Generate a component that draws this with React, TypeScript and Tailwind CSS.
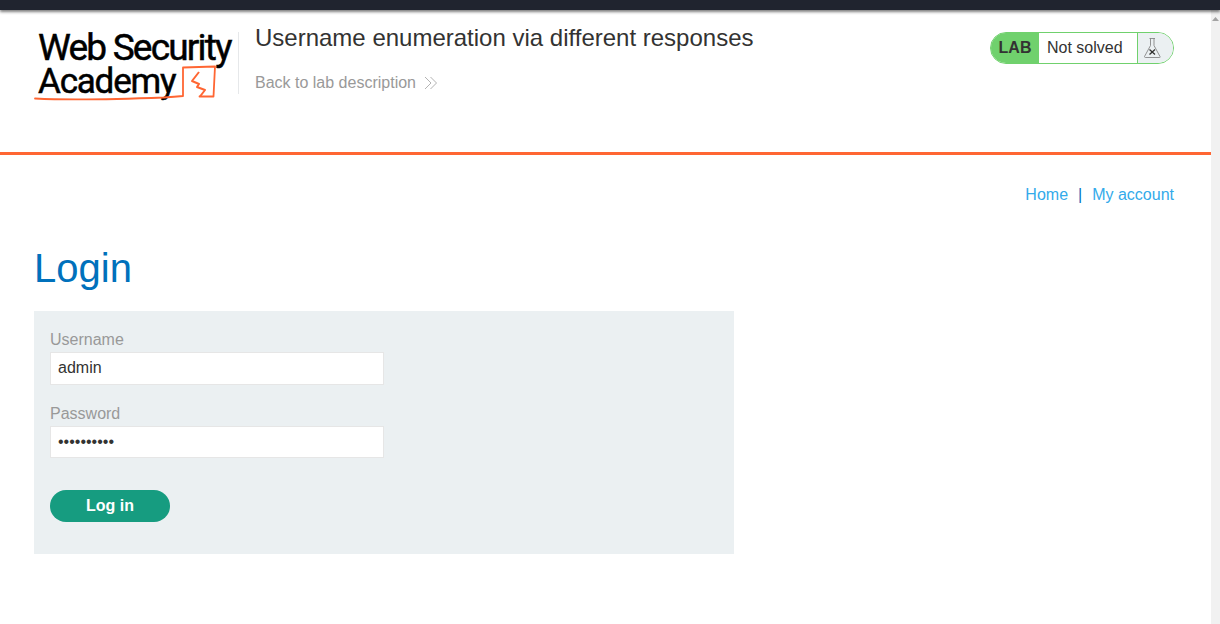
export default function App() {
  return (
    <div className="h-[624px] w-[1220px] overflow-hidden bg-white flex flex-col font-['Liberation_Sans',sans-serif] text-[16px] text-[#333332]">
      <div className="h-[10px] shrink-0 bg-[#20242f] shadow-[0_2px_3px_rgba(0,0,0,0.5)] relative z-10" />
      <div className="flex flex-1 min-h-0">
        <main className="w-[1211px] flex flex-col">
          <header className="h-[145px] shrink-0 border-b-[3px] border-[#ff6633] flex pl-[34px] pr-[37px]">
            <div className="w-[205px] shrink-0 relative flex flex-col self-start h-[84px]">
              <div className="absolute right-0 top-[22px] bottom-0 w-px bg-[#e6e8ea]" />
              <div className="pl-[4px] pt-[21px] font-['Roboto',sans-serif] font-normal text-black text-[37px] leading-[34px] tracking-[-1.8px] whitespace-nowrap [-webkit-text-stroke:0.5px_black]">Web Security</div>
              <div className="pl-[4px] font-['Roboto',sans-serif] font-normal text-black text-[35px] leading-[33px] tracking-[-1.2px] whitespace-nowrap [-webkit-text-stroke:0.5px_black]">Academy</div>
              <svg className="absolute left-0 top-[50px]" width="185" height="42" viewBox="0 0 185 42" fill="none">
                <path d="M1 38.500 C30 40 90 39 130 37.500 C138 37 144 36.500 149 36 L149 7.500 L181 6.500 L179.500 36.500 L165.500 36.500" stroke="#ff6633" strokeWidth="1.800" strokeLinejoin="round" strokeLinecap="round" />
                <path d="M165 12 L158 21 L165 24 L163 27 L171 30 L166 36.500" stroke="#ff6633" strokeWidth="2" strokeLinejoin="round" />
              </svg>
            </div>
            <div className="pl-[16px] flex-1 flex flex-col">
              <h2 className="text-[24px] leading-[27px] mt-[14px] text-[#333332]">Username enumeration via different responses</h2>
              <a className="mt-[23px] flex items-center text-[16px] leading-[18px] text-[#999999]">
                Back to lab description
                <svg className="ml-[8px]" width="14" height="14" viewBox="0 0 14 14" fill="none" stroke="#b3b3b3" strokeWidth="1">
                  <path d="M1 1 L7 7 L1 13" />
                  <path d="M6.500 1 L12.500 7 L6.500 13" />
                </svg>
              </a>
            </div>
            <div className="mt-[22px] h-[32px] w-[184px] flex rounded-[16px] border border-[#70d16d] overflow-hidden shrink-0">
              <div className="w-[48px] bg-[#70d16d] flex items-center justify-center font-bold text-[16px] text-[#333332]">LAB</div>
              <div className="flex-1 bg-white flex items-center pl-[8px] text-[16px] text-[#333332]">Not solved</div>
              <div className="w-[36px] border-l border-[#70d16d] bg-[#ebf0f2] flex pl-[5px] pt-[2px]">
                <svg width="20" height="26" viewBox="0 0 20 26" fill="none">
                  <path d="M6.500 3.500 H12 M7.500 3.500 V10.500 L1.500 21.500 Q1.500 22.500 2.500 22.500 H16.500 Q17.500 22.500 17 21.500 L11 10.500 V3.500" stroke="#7a7a7a" strokeWidth="0.800" />
                  <path d="M6.500 14.500 L12 19.500 M12 14.500 L6.500 19.500" stroke="#333332" strokeWidth="1.300" />
                </svg>
              </div>
            </div>
          </header>
          <div className="pr-[37px] pl-[34px] flex-1">
            <nav className="mt-[31px] flex justify-end items-center text-[16px] leading-[18px] text-[#33aaea]">
              <a>Home</a>
              <span className="mx-[10px] text-[#0071bc]">|</span>
              <a>My account</a>
            </nav>
            <h1 className="mt-[41px] text-[40px] leading-[46px] text-[#0071bc] font-normal">Login</h1>
            <section className="mt-[20px] w-[700px] h-[243px] bg-[#ebf0f2] pl-[16px] pt-[20px] flex flex-col items-start">
              <label className="text-[16px] leading-[18px] text-[#999999]">Username</label>
              <div className="mt-[3px] w-[334px] h-[33px] bg-white border border-[#e6e6e6] flex items-center pl-[7px] pb-[2px] text-[16px]">admin</div>
              <label className="mt-[20px] text-[16px] leading-[18px] text-[#999999]">Password</label>
              <div className="mt-[3px] w-[334px] h-[32px] bg-white border border-[#e6e6e6] flex items-center pl-[7px]">
                <input readOnly type="password" value="password12" className="w-full outline-none text-[16px] bg-transparent text-[#333332]" />
              </div>
              <button className="mt-[32px] w-[120px] h-[32px] rounded-[16px] bg-[#169c80] text-white font-bold text-[16px]">Log in</button>
            </section>
          </div>
        </main>
        <aside className="w-[9px] shrink-0 bg-[#f1f1f1] relative">
          <svg className="absolute top-[6px] left-[0px]" width="9" height="6" viewBox="0 0 9 6"><path d="M4.500 1 L8 5 H1 Z" fill="#a3a3a3" /></svg>
        </aside>
      </div>
    </div>
  );
}
